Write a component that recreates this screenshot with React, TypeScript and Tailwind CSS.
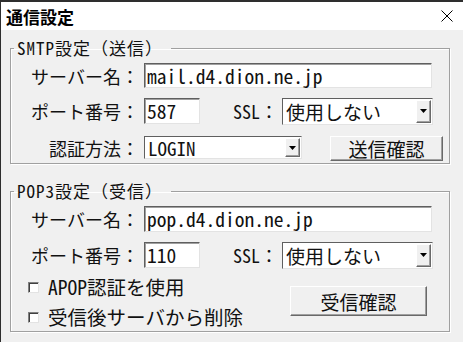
const mono = "font-['Noto_Sans_Mono_CJK_JP','Noto_Sans_CJK_JP',monospace]";

function TextBox({ value, width, height }: { value: string; width: string; height: string }) {
  return (
    <div
      className={`${width} ${height} flex items-center bg-white pl-[2px] text-[19.5px] leading-none text-[#111] border border-t-[#5f5f5f] border-l-[#5f5f5f] border-r-[#e3e3e3] border-b-[#e3e3e3] shadow-[inset_1px_1px_0_#a0a0a0]`}
    >
      {value}
    </div>
  );
}

function ComboBox({ value, width, height }: { value: string; width: string; height: string }) {
  return (
    <div
      className={`${width} ${height} flex items-stretch bg-white p-[1px] border border-t-[#5f5f5f] border-l-[#5f5f5f] border-r-[#e3e3e3] border-b-[#e3e3e3]`}
    >
      <div className="flex-1 flex items-center pl-[2px] text-[19px] leading-none text-[#111]">{value}</div>
      <div className="w-[15px] flex items-center justify-center bg-[#f0f0f0] border border-t-white border-l-white border-r-[#696969] border-b-[#696969] shadow-[inset_-1px_-1px_0_#a0a0a0]">
        <svg width="7" height="4" viewBox="0 0 7 4">
          <path d="M0 0h7L3.5 4z" fill="#000" />
        </svg>
      </div>
    </div>
  );
}

function PushButton({ label, className }: { label: string; className: string }) {
  return (
    <div
      className={`${className} flex items-center justify-center bg-[#f0f0f0] text-[19px] leading-none text-[#111] border border-t-white border-l-white border-r-[#696969] border-b-[#696969] shadow-[inset_-1px_-1px_0_#a0a0a0]`}
    >
      {label}
    </div>
  );
}

function CheckBox({ label }: { label: string }) {
  return (
    <div className="h-[22px] flex items-center">
      <div className="ml-[17px] w-[11px] h-[11px] bg-white border border-t-[#808080] border-l-[#808080] border-r-[#e3e3e3] border-b-[#e3e3e3] shadow-[inset_1px_1px_0_#404040]" />
      <span className="ml-[9px] text-[19.5px] leading-none text-[#111]">{label}</span>
    </div>
  );
}

function Group({ title, className, children }: { title: string; className: string; children: React.ReactNode }) {
  return (
    <fieldset
      className={`${className} w-[440px] border border-[#a0a0a0] shadow-[1px_1px_0_#fff,inset_1px_1px_0_#fff]`}
    >
      <legend className="ml-[3px] pl-[3px] pr-[8px] text-[17px] tracking-[1px] leading-[20px] text-[#111]">{title}</legend>
      {children}
    </fieldset>
  );
}

function Label({ text, width }: { text: string; width: string }) {
  return <div className={`${width} text-right text-[18px] leading-none text-[#111] shrink-0`}>{text}</div>;
}

export default function App() {
  return (
    <div className={`w-[463px] h-[342px] overflow-hidden bg-[#f0f0f0] text-black border-t-2 border-l border-[#2e2e2e] ${mono}`}>
      <div className="h-[28px] bg-white flex items-center justify-between pl-[5px] pr-[10px]">
        <span className="font-['Noto_Sans_CJK_JP',sans-serif] font-bold text-[17px] leading-none">通信設定</span>
        <svg width="12" height="12" viewBox="0 0 12 12">
          <path d="M0.5 0.5L11.5 11.5M11.5 0.5L0.5 11.5" stroke="#000" strokeWidth="1" />
        </svg>
      </div>

      <div className="pl-[9px]">
        <Group title="SMTP設定（送信）" className="mt-[8px] pt-[5px] pb-[2px]">
          <div className="h-[25px] flex items-center">
            <Label text="サーバー名：" width="w-[128px]" />
            <div className="ml-[5px]">
              <TextBox value="mail.d4.dion.ne.jp" width="w-[288px]" height="h-[25px]" />
            </div>
          </div>
          <div className="mt-[9px] h-[28px] flex items-center">
            <Label text="ポート番号：" width="w-[128px]" />
            <div className="ml-[5px]">
              <TextBox value="587" width="w-[56px]" height="h-[26px]" />
            </div>
            <span className="ml-[33px] text-[18px] leading-none text-[#111]">SSL：</span>
            <div className="ml-[4px]">
              <ComboBox value="使用しない" width="w-[151px]" height="h-[27px]" />
            </div>
          </div>
          <div className="mt-[11px] h-[25px] flex items-start">
            <div className="h-[23px] flex items-center">
              <Label text="認証方法：" width="w-[128px]" />
            </div>
            <div className="ml-[5px]">
              <ComboBox value="LOGIN" width="w-[158px]" height="h-[23px]" />
            </div>
            <PushButton label="送信確認" className="ml-[28px] w-[113px] h-[25px]" />
          </div>
        </Group>

        <Group title="POP3設定（受信）" className="mt-[17px] pt-[5px] pb-[3px]">
          <div className="h-[26px] flex items-center">
            <Label text="サーバー名：" width="w-[128px]" />
            <div className="ml-[5px]">
              <TextBox value="pop.d4.dion.ne.jp" width="w-[288px]" height="h-[26px]" />
            </div>
          </div>
          <div className="mt-[10px] h-[26px] flex items-center">
            <Label text="ポート番号：" width="w-[128px]" />
            <div className="ml-[5px]">
              <TextBox value="110" width="w-[56px]" height="h-[26px]" />
            </div>
            <span className="ml-[33px] text-[18px] leading-none text-[#111]">SSL：</span>
            <div className="ml-[4px]">
              <ComboBox value="使用しない" width="w-[151px]" height="h-[27px]" />
            </div>
          </div>
          <div className="mt-[8px] flex items-start">
            <div className="w-[279px] flex flex-col gap-[8px]">
              <CheckBox label="APOP認証を使用" />
              <CheckBox label="受信後サーバから削除" />
            </div>
            <PushButton label="受信確認" className="mt-[10px] w-[137px] h-[30px]" />
          </div>
        </Group>
      </div>
    </div>
  );
}
